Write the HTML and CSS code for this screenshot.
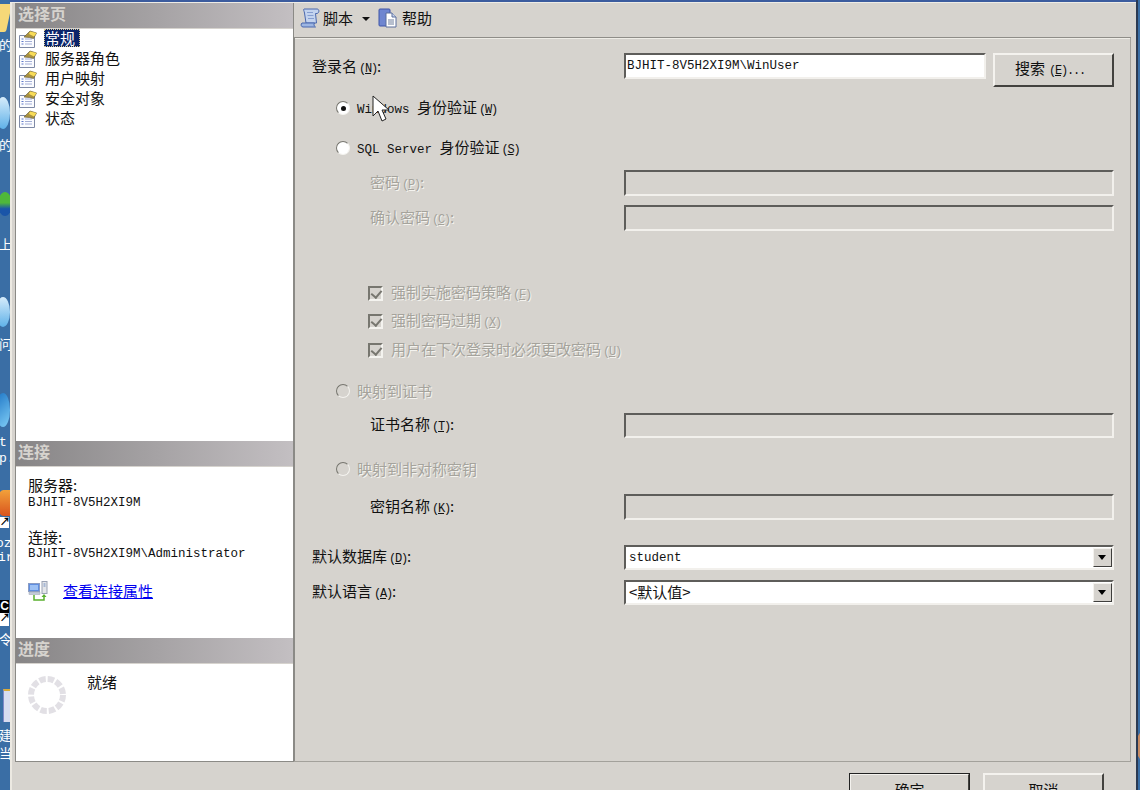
FILE: index.html
```html
<!DOCTYPE html>
<html lang="zh-CN">
<head>
<meta charset="utf-8">
<title>登录名</title>
<link rel="stylesheet" href="styles.css">
</head>
<body>
<svg class="defs" width="0" height="0" aria-hidden="true">
  <symbol id="page" viewBox="0 0 18 18">
    <path d="M.5 5.500h15v12H.5z" fill="#fbfcff" stroke="#7f8aa6"/>
    <path d="M2.500 9h2M2.500 11.500h2M2.500 14h2" stroke="#5f78c8"/>
    <path d="M6 9h7M6 11.500h7M6 14h7" stroke="#a3aed6"/>
    <path d="M5 7l6-6 6.500 2-3 5.500-4-1z" fill="#a8913f" stroke="#6f6238" stroke-width=".7"/>
    <path d="M11 1.500l6.500 1.500-2.500 3.500-5-2.500z" fill="#f8dc58"/>
  </symbol>
</svg>
<div class="desktop">
  <div class="folder"></div>
  <span class="dtext t1">的</span>
  <div class="screen s1"></div>
  <span class="dtext t2">的</span>
  <div class="globe"></div>
  <span class="dtext t3">上</span>
  <div class="screen s2"></div>
  <span class="dtext t4">问</span>
  <div class="screen s3"></div>
  <span class="dtext t5">t</span>
  <span class="dtext t6">p.</span>
  <div class="fox"></div>
  <div class="shortcut sc1">↗</div>
  <span class="dtext t7">oz</span>
  <span class="dtext t8">ir</span>
  <div class="shortcut sc2">C</div>
  <div class="shortcut sc3">↗</div>
  <span class="dtext t9">令</span>
  <div class="note"></div>
  <span class="dtext t10">建</span>
  <span class="dtext t11">当</span>
</div>
<div class="window">
  <div class="titleline"></div>
  <div class="main">
    <aside class="side">
      <section class="pages">
        <h2 class="head">选择页</h2>
        <ul class="list">
          <li class="item"><svg class="pi"><use href="#page"/></svg><span class="sel">常规</span></li>
          <li class="item"><svg class="pi"><use href="#page"/></svg><span>服务器角色</span></li>
          <li class="item"><svg class="pi"><use href="#page"/></svg><span>用户映射</span></li>
          <li class="item"><svg class="pi"><use href="#page"/></svg><span>安全对象</span></li>
          <li class="item"><svg class="pi"><use href="#page"/></svg><span>状态</span></li>
        </ul>
      </section>
      <section class="conn">
        <h2 class="head">连接</h2>
        <div class="conn-body">
          <div class="c-label first">服务器:</div>
          <div class="mono c-val">BJHIT-8V5H2XI9M</div>
          <div class="c-label second">连接:</div>
          <div class="mono c-val">BJHIT-8V5H2XI9M\Administrator</div>
          <div class="link-row">
            <svg class="link-icon" viewBox="0 0 20 20" width="20" height="20">
              <rect x="0.500" y="2.500" width="11" height="8" fill="#5f8ee0" stroke="#8a9cc4"/>
              <rect x="2" y="4" width="8" height="5" fill="#9cc0f4"/>
              <rect x="1" y="11" width="11" height="2.500" fill="#c4cbd8" stroke="#9aa2b4" stroke-width=".5"/>
              <rect x="14" y="0.500" width="5" height="12" fill="#e4e6ea" stroke="#9aa2b4"/>
              <path d="M15.500 3h2M15.500 5h2" stroke="#6f8cc0"/>
              <path d="M6 14v5h10v-5" fill="none" stroke="#5ab02e" stroke-width="1.500"/>
              <path d="M13.500 16l2.500-3 2.500 3z" fill="#5ab02e"/>
            </svg>
            <a class="link" href="#">查看连接属性</a>
          </div>
        </div>
      </section>
      <section class="prog">
        <h2 class="head">进度</h2>
        <div class="prog-body">
          <svg class="spinner" viewBox="0 0 40 40" width="40" height="40">
            <circle cx="20" cy="20" r="16" fill="none" stroke="#e2e0e5" stroke-width="6" stroke-dasharray="6.400 2"/>
          </svg>
          <span class="ready">就绪</span>
        </div>
      </section>
    </aside>
    <div class="content">
      <div class="toolbar">
        <svg class="tb-icon" viewBox="0 0 20 20" width="20" height="20">
          <path d="M4 1H17c2.500 0 2.500 4 0 4.500H15.500l1 9.500H6L4.500 5C4.200 3 3 1.500 4 1z" fill="#c3d3ee" stroke="#4a68ae"/>
          <path d="M2 15h12.500c-1 1.500-.5 3 1 4H3C1 19 .5 16 2 15z" fill="#9db6e2" stroke="#4a68ae"/>
          <path d="M7 4.500h6M7.500 7.500h6M8 10.500h6" stroke="#7f97cc" stroke-width=".9"/>
        </svg>
        <span class="tb-text">脚本</span>
        <span class="caret"></span>
        <svg class="tb-icon help" viewBox="0 0 20 20" width="20" height="20">
          <rect x="1" y="1" width="11" height="17" rx="1" fill="#6f86d0" stroke="#3f55a8"/>
          <path d="M8 5h6l4 4v10H8z" fill="#fff" stroke="#5a6f9c"/>
          <path d="M14 5v4h4" fill="#c8d4ec" stroke="#5a6f9c"/>
          <path d="M10 12h6M10 14h6M10 16h6" stroke="#6f7f9c"/>
        </svg>
        <span class="tb-text">帮助</span>
      </div>
      <form class="form">
        <div class="row mt-login">
          <label class="lbl">登录名<span class="mn">(<u>N</u>)</span>:</label>
          <div class="field narrow mono">BJHIT-8V5H2XI9M\WinUser</div>
          <button class="btn search" type="button">搜索<span class="mn">(<u>E</u>)...</span></button>
        </div>
        <div class="row opt mt-19"><span class="radio on"></span><span class="rtext"><span class="mono">Windows </span>身份验证<span class="mn">(<u>W</u>)</span></span></div>
        <div class="row opt mt-20"><span class="radio"></span><span class="rtext"><span class="mono">SQL Server </span>身份验证<span class="mn">(<u>S</u>)</span></span></div>
        <div class="row h26 mt-12"><label class="lbl sub off">密码<span class="mn">(<u>P</u>)</span>:</label><div class="field wide dis"></div></div>
        <div class="row h26 mt-9"><label class="lbl sub off">确认密码<span class="mn">(<u>C</u>)</span>:</label><div class="field wide dis"></div></div>
        <div class="row opt mt-52"><span class="check"></span><span class="ctext off">强制实施密码策略<span class="mn">(<u>F</u>)</span></span></div>
        <div class="row opt mt-8"><span class="check"></span><span class="ctext off">强制密码过期<span class="mn">(<u>X</u>)</span></span></div>
        <div class="row opt mt-9"><span class="check"></span><span class="ctext off">用户在下次登录时必须更改密码<span class="mn">(<u>U</u>)</span></span></div>
        <div class="row opt mt-21"><span class="radio dim"></span><span class="rtext off">映射到证书</span></div>
        <div class="row h25 mt-12"><label class="lbl sub">证书名称<span class="mn">(<u>T</u>)</span>:</label><div class="field wide dis"></div></div>
        <div class="row opt mt-21"><span class="radio dim"></span><span class="rtext off">映射到非对称密钥</span></div>
        <div class="row h26 mt-15"><label class="lbl sub">密钥名称<span class="mn">(<u>K</u>)</span>:</label><div class="field wide dis"></div></div>
        <div class="row h25 mt-25"><label class="lbl">默认数据库<span class="mn">(<u>D</u>)</span>:</label><div class="field wide combo"><span class="mono">student</span><span class="drop"></span></div></div>
        <div class="row h25 mt-10"><label class="lbl">默认语言<span class="mn">(<u>A</u>)</span>:</label><div class="field wide combo"><span class="deflt">&lt;默认值&gt;</span><span class="drop"></span></div></div>
      </form>
    </div>
  </div>
  <div class="actions">
    <button class="btn action default" type="button">确定</button>
    <button class="btn action" type="button">取消</button>
  </div>
</div>
<div class="edge"><div class="blob"></div></div>
<svg class="cursor" viewBox="0 0 18 28" width="18" height="28">
  <path d="M1 1v20l5-5 4 10 4-2-4-9h7z" fill="#fff" stroke="#222" stroke-width="1"/>
</svg>
</body>
</html>
```
FILE: styles.css
```css
* { box-sizing: border-box; }
html, body { margin: 0; height: 790px; overflow: hidden; }
body {
  position: relative;
  display: flex;
  width: 1140px;
  background: #3a6ea5;
  color: #111;
  font: 15px/20px "Noto Sans CJK SC", "Liberation Sans", sans-serif;
}
.defs { position: absolute; }
.mono { font-family: "Liberation Mono", "Noto Sans CJK SC", monospace; font-size: 12.5px; white-space: pre; }
.mn {
  margin-left: 2px;
  font-family: "Liberation Mono", monospace;
  font-size: 12px;
  letter-spacing: -1.2px;
}
.off { color: #a5a39c; text-shadow: 1px 1px 0 #f4f3ef; }

/* desktop strip */
.desktop { position: relative; flex: 0 0 10px; height: 790px; overflow: hidden; background: #3a6ea5; }
.dtext { position: absolute; left: -1px; color: #fff; font-size: 13px; line-height: 14px; white-space: nowrap; }
.t1 { top: 38px; } .t2 { top: 138px; } .t3 { top: 237px; } .t4 { top: 337px; }
.t5 { top: 436px; font-family: "Liberation Mono", monospace; }
.t6 { top: 452px; font-family: "Liberation Mono", monospace; }
.t7 { top: 537px; left: -4px; font-family: "Liberation Mono", monospace; }
.t8 { top: 551px; left: -2px; font-family: "Liberation Mono", monospace; }
.t9 { top: 632px; } .t10 { top: 728px; } .t11 { top: 746px; }
.folder { position: absolute; top: 4px; left: -6px; width: 15px; height: 28px; background: #f6d878; border-radius: 2px; transform: skewX(-12deg); }
.screen { position: absolute; left: -4px; width: 14px; border-radius: 50%; background: linear-gradient(#d6ecfb, #5fb1e8); }
.s1 { top: 97px; height: 32px; }
.s2 { top: 297px; height: 30px; }
.s3 { top: 393px; height: 34px; background: linear-gradient(135deg, #1f77c6, #7fcdf6); }
.globe { position: absolute; top: 192px; left: -2px; width: 14px; height: 24px; border-radius: 50%; background: linear-gradient(#4fb83a 45%, #1a55a8 70%); }
.fox { position: absolute; top: 490px; left: -3px; width: 13px; height: 26px; background: linear-gradient(#f2a13a, #d9541e); border-radius: 50% 0 0 50%; }
.shortcut { position: absolute; left: 0; width: 9px; background: #fff; color: #000; font: bold 10px/10px "Liberation Sans", sans-serif; text-align: center; }
.sc1 { top: 517px; height: 11px; }
.sc2 { top: 600px; height: 13px; background: #000; color: #fff; font-size: 12px; line-height: 13px; }
.sc3 { top: 613px; height: 13px; }
.note { position: absolute; top: 689px; left: 3px; width: 7px; height: 33px; background: #d8dcf0; border-left: 1px solid #7f88c8; border-top: 2px solid #d8ab3a; }

/* window */
.window { flex: 0 0 1125px; height: 790px; background: #d6d3ce; border-left: 2px solid #ece9e2; }
.titleline { height: 3px; margin-left: -2px; background: linear-gradient(#3c5c9e 66%, #eeece6 66%); }
.main { display: flex; height: 759px; margin-left: 3px; margin-right: 5px; }
.edge { position: relative; flex: 0 0 5px; height: 790px; border-left: 2px solid #2b3a52; overflow: hidden; }
.blob { position: absolute; top: 731px; left: -2px; width: 16px; height: 30px; border-radius: 50%; background: #c68b63; }

/* side */
.side { display: flex; flex-direction: column; flex: 0 0 279px; background: #fff; border: solid #8b8a86; border-width: 0 1px 1px 1px; }
.head {
  margin: 0;
  height: 26px;
  padding-left: 2px;
  background: linear-gradient(90deg, #878586, #c3bfc2);
  border-bottom: 1px solid #d6d3ce;
  color: #d6d3ce;
  font-size: 16px;
  font-weight: 700;
  line-height: 21px;
}
.pages { flex: 0 0 438px; }
.conn { flex: 0 0 197px; }
.prog { flex: 1; }
.list { margin: 0; padding: 0; list-style: none; }
.item { display: flex; align-items: center; height: 20px; padding: 0 0 2px 3px; white-space: nowrap; }
.pi { flex: none; width: 18px; height: 18px; margin: 2px 8px 0 0; }
.sel { margin-left: -1px; padding: 0 5px 0 1px; height: 18px; line-height: 18px; background: #0a246a; color: #fff; outline: 1px dotted #d8c890; outline-offset: -1px; }
.conn-body { padding: 9px 0 0 12px; }
.c-label { line-height: 17px; }
.c-label.first { height: 20px; }
.c-label.second { height: 19px; margin-top: 18px; }
.c-val { height: 14px; line-height: 14px; }
.link-row { display: flex; align-items: center; margin-top: 20px; }
.link-icon { flex: none; margin-right: 15px; }
.link { color: #0000f0; text-decoration: underline; }
.prog-body { position: relative; height: 97px; }
.spinner { position: absolute; left: 11px; top: 11px; }
.ready { position: absolute; left: 71px; top: 8px; }

/* content */
.content { flex: 1; display: flex; flex-direction: column; min-width: 0; }
.toolbar { display: flex; align-items: center; height: 35px; padding: 0 0 4px 6px; border-bottom: 1px solid #8f8d88; }
.tb-icon { flex: none; margin-right: 3px; }
.help { margin-right: 4px; }
.tb-text { line-height: 20px; }
.caret { width: 0; height: 0; margin: 2px 8px 0 9px; border: 4px solid transparent; border-top-color: #111; border-bottom-width: 0; }
.form { flex: 1; display: flex; flex-direction: column; padding-left: 18px; padding-right: 16px; border: solid #a3a19b; border-width: 0 1px 1px 0; box-shadow: inset 1px 0 0 #8b8a86, inset 0 1px 0 #eeece6; }
.row { display: flex; align-items: center; height: 20px; flex: none; }
.h26 { height: 26px; } .h25 { height: 25px; }
.mt-login { margin-top: 15px; height: 26px; align-items: flex-start; }
.mt-8 { margin-top: 8px; } .mt-9 { margin-top: 9px; } .mt-10 { margin-top: 10px; }
.mt-12 { margin-top: 12px; } .mt-15 { margin-top: 15px; } .mt-19 { margin-top: 19px; }
.mt-20 { margin-top: 20px; } .mt-21 { margin-top: 21px; } .mt-25 { margin-top: 25px; }
.mt-52 { margin-top: 52px; }
.lbl { flex: 0 0 312px; white-space: nowrap; line-height: 26px; }
.lbl.sub { padding-left: 58px; }
.field {
  height: 100%;
  padding: 0 3px;
  background: #fff;
  border: 2px solid;
  border-color: #5e5d5a #f2f0ec #f2f0ec #5e5d5a;
  line-height: 20px;
  white-space: nowrap;
}
.narrow { flex: 0 0 362px; height: 26px; padding: 1px 1px 0; }
.wide { flex: 0 0 490px; }
.dis { background: #d6d3ce; }
.combo { display: flex; align-items: center; justify-content: space-between; padding-right: 0; }
.deflt { margin-top: -2px; }
.drop {
  position: relative;
  flex: none;
  width: 19px;
  height: 19px;
  margin-right: 0;
  background: #d6d3ce;
  border: 1px solid;
  border-color: #f4f2ee #3f3e3c #3f3e3c #f4f2ee;
}
.drop::after {
  content: "";
  position: absolute;
  left: 4px;
  top: 6px;
  border: 4px solid transparent;
  border-top: 5px solid #000;
  border-bottom-width: 0;
}
.btn {
  background: #d6d3ce;
  border: 2px solid;
  border-color: #f4f2ee #43423f #43423f #f4f2ee;
  color: #111;
  font: inherit;
  padding: 0;
}
.search { flex: 0 0 121px; height: 34px; margin-left: 7px; padding: 0 7px 2px 0; }
.search .mn { margin-left: 4px; }
.radio {
  position: relative;
  flex: none;
  width: 14px;
  height: 14px;
  margin-left: 24px;
  border-radius: 50%;
  background: #fff;
  border: 1px solid;
  border-color: #77766f #f4f3ef #f4f3ef #77766f;
}
.radio.on::after {
  content: "";
  position: absolute;
  left: 3.500px;
  top: 3.500px;
  width: 5px;
  height: 5px;
  border-radius: 50%;
  background: #111;
}
.radio.dim { background: #d6d3ce; }
.rtext { margin-left: 7px; white-space: nowrap; }
.check {
  position: relative;
  flex: none;
  width: 15px;
  height: 15px;
  margin-left: 56px;
  background: #d6d3ce;
  border: 2px solid;
  border-color: #77766f #f4f3ef #f4f3ef #77766f;
}
.check::after {
  content: "";
  position: absolute;
  left: 2.500px;
  top: 0;
  width: 5px;
  height: 8px;
  border: solid #77766f;
  border-width: 0 2px 2px 0;
  transform: rotate(40deg);
}
.ctext { margin-left: 8px; white-space: nowrap; }

/* bottom buttons */
.actions { display: flex; gap: 13px; margin-top: 11px; margin-left: 837px; height: 30px; overflow: visible; }
.action { flex: 0 0 121px; height: 34px; line-height: 26px; padding-top: 0; }
.default { outline: 1px solid #222; outline-offset: -1px; }

.cursor { position: absolute; left: 372px; top: 95px; pointer-events: none; }
```
